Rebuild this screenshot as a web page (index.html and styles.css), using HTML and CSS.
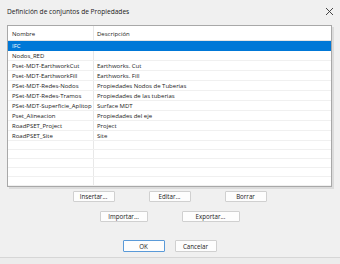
FILE: index.html
```html
<!DOCTYPE html>
<html>
<head>
<meta charset="utf-8">
<link rel="stylesheet" href="styles.css">
</head>
<body>
<div class="window">
  <div class="titlebar">
    <span class="title">Definición de conjuntos de Propiedades</span>
    <svg class="close" width="9" height="9" viewBox="0 0 9 9"><path d="M1 1 L8 8 M8 1 L1 8" stroke="#333" stroke-width="0.9" fill="none"/></svg>
  </div>
  <div class="content">
    <div class="listbox">
      <div class="row header"><div class="c1">Nombre</div><div class="c2">Descripción</div></div>
      <div class="row sel"><div class="c1">IFC</div><div class="c2"></div></div>
      <div class="row"><div class="c1">Nodos_RED</div><div class="c2"></div></div>
      <div class="row"><div class="c1">Pset-MDT-EarthworkCut</div><div class="c2">Earthworks. Cut</div></div>
      <div class="row"><div class="c1">Pset-MDT-EarthworkFill</div><div class="c2">Earthworks. Fill</div></div>
      <div class="row"><div class="c1">PSet-MDT-Redes-Nodos</div><div class="c2">Propiedades Nodos de Tuberias</div></div>
      <div class="row"><div class="c1">PSet-MDT-Redes-Tramos</div><div class="c2">Propiedades de las tuberias</div></div>
      <div class="row"><div class="c1">PSet-MDT-Superficie_Aplitop</div><div class="c2">Surface MDT</div></div>
      <div class="row"><div class="c1">Pset_Alineacion</div><div class="c2">Propiedades del eje</div></div>
      <div class="row"><div class="c1">RoadPSET_Project</div><div class="c2">Project</div></div>
      <div class="row"><div class="c1">RoadPSET_Site</div><div class="c2">Site</div></div>
      <div class="row"><div class="c1"></div><div class="c2"></div></div>
      <div class="row"><div class="c1"></div><div class="c2"></div></div>
      <div class="row"><div class="c1"></div><div class="c2"></div></div>
      <div class="row"><div class="c1"></div><div class="c2"></div></div>
      <div class="row last"><div class="c1"></div><div class="c2"></div></div>
    </div>
    <div class="btnrow r1">
      <button class="btn">Insertar...</button>
      <button class="btn">Editar...</button>
      <button class="btn">Borrar</button>
    </div>
    <div class="btnrow r2">
      <button class="btn w48">Importar...</button>
      <button class="btn w58">Exportar...</button>
    </div>
    <div class="btnrow r3">
      <button class="btn ok">OK</button>
      <button class="btn">Cancelar</button>
    </div>
  </div>
  <div class="footer"></div>
</div>
</body>
</html>
```
FILE: styles.css
```css
html, body {
  margin: 0;
  padding: 0;
  background: #f0f0f0;
}
.window {
  width: 340px;
  height: 264px;
  box-sizing: border-box;
  background: #f0f0f0;
  font-family: "Open Sans", "Noto Sans", sans-serif;
  font-size: 6px;
  color: #1a1a1a;
  display: flex;
  flex-direction: column;
}
.titlebar {
  height: 23px;
  display: flex;
  align-items: center;
  justify-content: space-between;
  padding: 0 6px 0 7px;
  box-sizing: border-box;
}
.title {
  font-size: 6.6px;
  color: #1a1a1a;
}
.close {
  display: block;
}
.content {
  padding: 2px 8px 0 7px;
  display: flex;
  flex-direction: column;
  flex: 1;
}
.listbox {
  background: #fff;
  border: 1px solid #a8a8a8;
  height: 162px;
  box-sizing: border-box;
  box-shadow: 2px 2px 0 #dcdcdc;
  display: flex;
  flex-direction: column;
  overflow: hidden;
}
.row {
  display: flex;
  height: 10px;
  line-height: 10px;
  border-bottom: 1px solid #f0f0f0;
  box-sizing: border-box;
}
.row.header {
  height: 15px;
  line-height: 16px;
  border-bottom: 1px solid #e5e5e5;
}
.row.sel {
  background: #0078d7;
  color: #fff;
  border-bottom-color: #0078d7;
}
.c1 {
  width: 81px;
  padding-left: 4px;
  border-right: 1px solid #e8e8e8;
  white-space: nowrap;
  overflow: hidden;
}
.row.sel .c1 {
  border-right-color: #0078d7;
}
.c2 {
  flex: 1;
  padding-left: 3px;
  white-space: nowrap;
}
.btnrow {
  display: flex;
  justify-content: center;
}
.r1 { margin-top: 4px; gap: 34px; }
.r2 { margin-top: 9px; gap: 34px; }
.r3 { margin-top: 18px; gap: 10px; }
.btn {
  width: 42px;
  height: 11px;
  padding: 0;
  font-family: inherit;
  font-size: 6.2px;
  color: #1a1a1a;
  background: #fdfdfd;
  border: 1px solid #d0d0d0;
  border-radius: 1px;
  line-height: 9px;
}
.btn.w48 { width: 48px; }
.btn.w58 { width: 58px; }
.r3 .btn { height: 12px; }
.btn.ok {
  border-color: #5a9ad8;
}
.footer {
  height: 6px;
  border-top: 1px solid #d6d6d6;
  background: #ececec;
}
```
